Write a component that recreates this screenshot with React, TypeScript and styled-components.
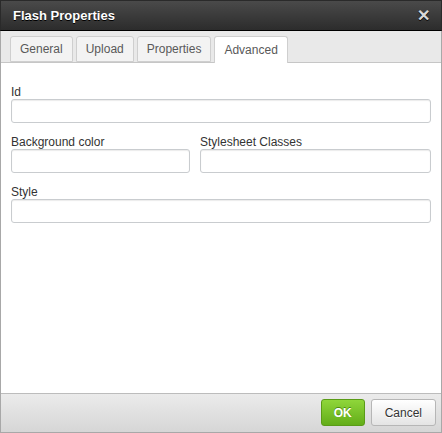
import styled, { createGlobalStyle } from 'styled-components';

const GlobalStyle = createGlobalStyle`
  html, body {
    margin: 0;
    padding: 0;
    background: #ffffff;
  }
  body {
    font-family: "Liberation Sans", Arial, sans-serif;
    font-size: 12px;
    color: #333333;
  }
`;

const Dialog = styled.div`
  width: 442px;
  height: 433px;
  box-sizing: border-box;
  display: flex;
  flex-direction: column;
  border: 1px solid #a8a8a8;
  border-top: none;
  background: #ffffff;
`;

const TitleBar = styled.div`
  height: 31px;
  flex-shrink: 0;
  margin: 0 -1px;
  box-sizing: border-box;
  display: flex;
  align-items: center;
  justify-content: space-between;
  padding: 0 11px 0 12px;
  background: linear-gradient(#4a4a4a, #2c2c2c);
  border: 1px solid #2a2a2a;
  border-bottom: 1px solid #000000;
`;

const Title = styled.span`
  color: #ffffff;
  font-weight: bold;
  font-size: 13px;
  text-shadow: 0 1px 0 #000000;
`;

const Close = styled.span`
  color: #d8d8d8;
  font-weight: bold;
  font-size: 16px;
  line-height: 1;
  text-shadow: 0 1px 0 #000000;
`;

const TabBar = styled.div`
  height: 32px;
  flex-shrink: 0;
  box-sizing: border-box;
  display: flex;
  align-items: flex-end;
  gap: 3px;
  padding: 0 9px;
  background: #e9e9e9;
  border-bottom: 1px solid #c6c6c6;
`;

const Tab = styled.div<{ $active?: boolean }>`
  box-sizing: border-box;
  display: flex;
  align-items: center;
  padding: 0 9px;
  margin-bottom: ${p => (p.$active ? '-1px' : '0')};
  height: ${p => (p.$active ? '27px' : '26px')};
  border: 1px solid #cfcfcf;
  border-bottom: ${p => (p.$active ? 'none' : '1px solid #cfcfcf')};
  border-radius: 3px 3px 0 0;
  background: ${p => (p.$active ? '#ffffff' : '#f3f3f3')};
  color: #595959;
  font-size: 12px;
`;

const Body = styled.div`
  flex: 1;
  padding: 22px 10px 10px 10px;
  display: flex;
  flex-direction: column;
  gap: 12px;
`;

const Row = styled.div`
  display: grid;
  grid-template-columns: 179px 1fr;
  column-gap: 10px;
`;

const Field = styled.div`
  display: flex;
  flex-direction: column;
`;

const Label = styled.label`
  line-height: 14px;
  font-size: 12px;
  color: #333333;
`;

const Input = styled.input`
  height: 24px;
  box-sizing: border-box;
  border: 1px solid #c9cccf;
  border-radius: 3px;
  box-shadow: inset 0 1px 1px rgba(0, 0, 0, 0.08);
  background: #ffffff;
  font-family: inherit;
  font-size: 12px;
  padding: 0 4px;
  margin: 0;
  outline: none;
`;

const Footer = styled.div`
  height: 39px;
  flex-shrink: 0;
  box-sizing: border-box;
  display: flex;
  align-items: center;
  justify-content: flex-end;
  gap: 6px;
  padding: 0 5px 1px 0;
  border-top: 1px solid #bcbcbc;
  background: linear-gradient(#ebebeb, #d6d6d6);
`;

const Button = styled.button<{ $primary?: boolean }>`
  height: 27px;
  box-sizing: border-box;
  padding: 0 ${p => (p.$primary ? '12px' : '13px')};
  border-radius: 3px;
  font-family: inherit;
  font-size: 12px;
  font-weight: ${p => (p.$primary ? 'bold' : 'normal')};
  color: ${p => (p.$primary ? '#ffffff' : '#333333')};
  border: 1px solid ${p => (p.$primary ? '#5a9b17' : '#b6b6b6')};
  background: ${p =>
    p.$primary
      ? 'linear-gradient(#8fd63a, #63ad19)'
      : 'linear-gradient(#ffffff, #e4e4e4)'};
  text-shadow: ${p => (p.$primary ? '0 -1px 0 #4a8a10' : '0 1px 0 #ffffff')};
  cursor: pointer;
`;

export default function App() {
  return (
    <>
      <GlobalStyle />
      <Dialog>
        <TitleBar>
          <Title>Flash Properties</Title>
          <Close>✕</Close>
        </TitleBar>
        <TabBar>
          <Tab>General</Tab>
          <Tab>Upload</Tab>
          <Tab>Properties</Tab>
          <Tab $active>Advanced</Tab>
        </TabBar>
        <Body>
          <Field>
            <Label>Id</Label>
            <Input />
          </Field>
          <Row>
            <Field>
              <Label>Background color</Label>
              <Input />
            </Field>
            <Field>
              <Label>Stylesheet Classes</Label>
              <Input />
            </Field>
          </Row>
          <Field>
            <Label>Style</Label>
            <Input />
          </Field>
        </Body>
        <Footer>
          <Button $primary>OK</Button>
          <Button>Cancel</Button>
        </Footer>
      </Dialog>
    </>
  );
}
